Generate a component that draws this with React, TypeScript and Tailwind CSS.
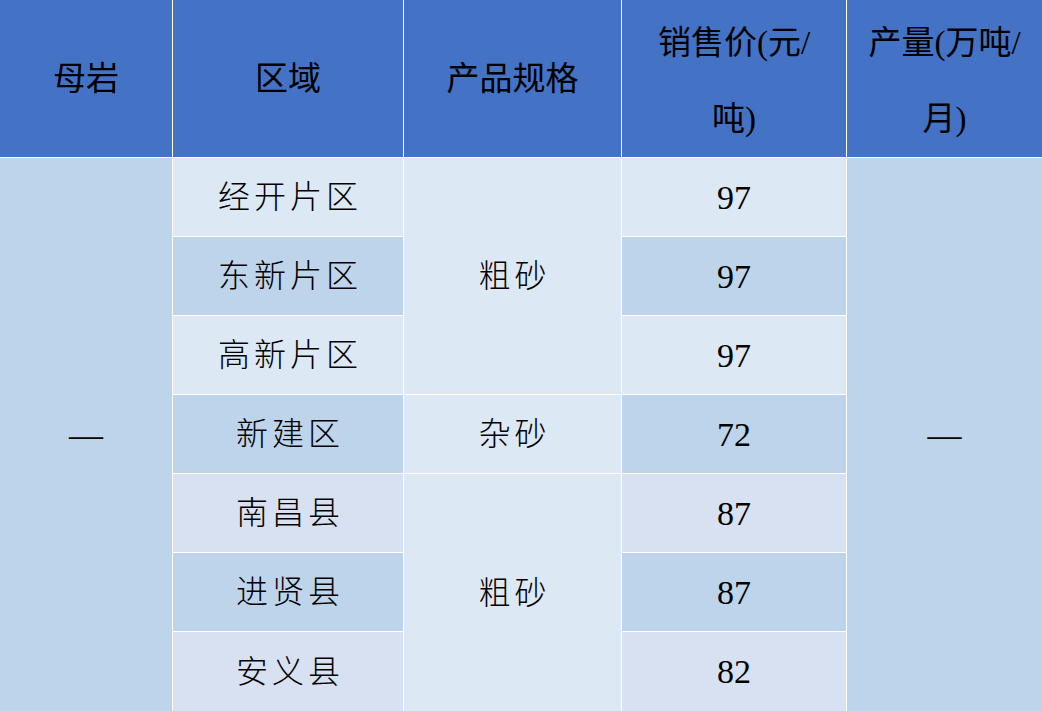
import React from 'react';

const serif = { fontFamily: '"Liberation Serif", "Noto Sans CJK SC", serif' };

const regions = [
  { name: '经开片区', price: '97', bg: 'bg-[#dde8f5]' },
  { name: '东新片区', price: '97', bg: 'bg-[#bed4eb]' },
  { name: '高新片区', price: '97', bg: 'bg-[#dde8f5]' },
  { name: '新建区', price: '72', bg: 'bg-[#bed4eb]' },
  { name: '南昌县', price: '87', bg: 'bg-[#d8e1f1]' },
  { name: '进贤县', price: '87', bg: 'bg-[#bed4eb]' },
  { name: '安义县', price: '82', bg: 'bg-[#d8e1f1]' },
];

function Head({ children }: { children: React.ReactNode }) {
  return (
    <div className="bg-[#4472c4] flex items-center justify-center text-center text-black text-[33px] leading-[76px] font-normal">
      {children}
    </div>
  );
}

export default function App() {
  return (
    <div className="w-[1042px] h-[711px] overflow-hidden bg-white" style={serif}>
      <div className="grid grid-cols-[172px_230px_217px_224px_195px] grid-rows-[157px_repeat(6,78px)_79px] gap-px bg-white">
        <Head>母岩</Head>
        <Head>区域</Head>
        <Head>产品规格</Head>
        <Head>
          <span className="pt-1">销售价(元/<br />吨)</span>
        </Head>
        <Head>
          <span className="pt-1">产量(万吨/<br />月)</span>
        </Head>

        <div className="row-span-7 col-start-1 row-start-2 bg-[#bed4eb] flex items-center justify-center text-[34px] text-black">
          —
        </div>

        {regions.map((r, i) => (
          <React.Fragment key={r.name}>
            <div
              className={`${r.bg} col-start-2 flex items-center justify-center text-[32px] font-light tracking-[4px] pl-[4px] text-black`}
              style={{ gridRowStart: i + 2 }}
            >
              {r.name}
            </div>
            <div
              className={`${r.bg} col-start-4 flex items-center justify-center text-[34px] text-black`}
              style={{ gridRowStart: i + 2 }}
            >
              {r.price}
            </div>
          </React.Fragment>
        ))}

        <div className="col-start-3 row-start-2 row-span-3 bg-[#dde8f5] flex items-center justify-center text-[32px] font-light tracking-[4px] pl-[4px] text-black">
          粗砂
        </div>
        <div className="col-start-3 row-start-5 bg-[#dde8f5] flex items-center justify-center text-[32px] font-light tracking-[4px] pl-[4px] text-black">
          杂砂
        </div>
        <div className="col-start-3 row-start-6 row-span-3 bg-[#dde8f5] flex items-center justify-center text-[32px] font-light tracking-[4px] pl-[4px] text-black">
          粗砂
        </div>

        <div className="col-start-5 row-start-2 row-span-7 bg-[#bed4eb] flex items-center justify-center text-[34px] text-black">
          —
        </div>
      </div>
    </div>
  );
}
